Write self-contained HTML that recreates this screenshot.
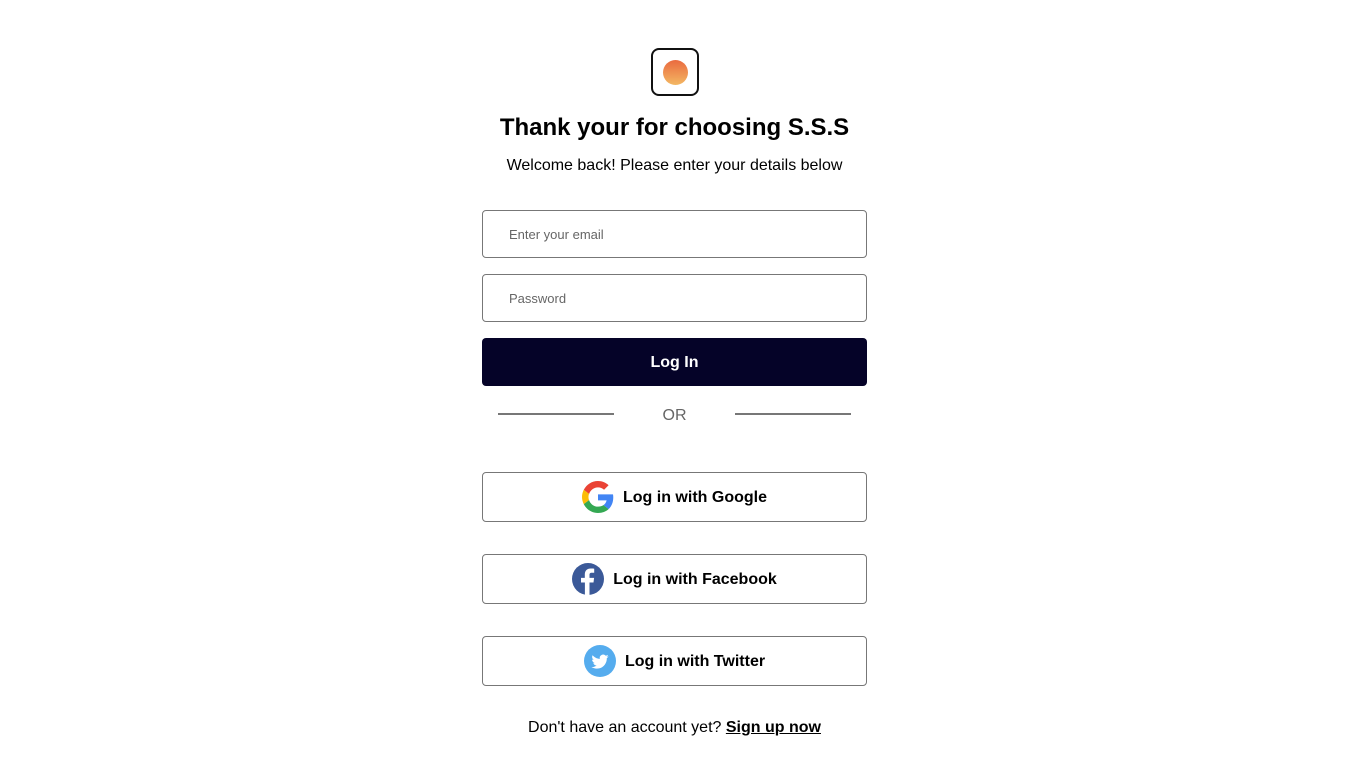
<!DOCTYPE html>
<html><head><meta charset="utf-8"><style>
*{box-sizing:border-box;margin:0;padding:0}
body{width:1349px;height:784px;background:#fff;font-family:"Liberation Sans",Arial,sans-serif;position:relative;color:#000}
.abs{position:absolute}
.logo{left:651px;top:48px;width:48px;height:48px;border:2px solid #111;border-radius:8px}
.logo div{position:absolute;left:10px;top:10px;width:25px;height:25px;border-radius:50%;background:linear-gradient(#ea6a3f,#f3b863)}
h1{position:absolute;top:114px;left:0;width:1349px;text-align:center;font-size:24px;font-weight:bold}
.sub{top:157px;left:0;width:1349px;text-align:center;font-size:16px}
.in{left:482px;width:385px;height:48px;border:1px solid #777;border-radius:4px;font-size:13px;color:#666;padding-left:26px;line-height:48px}
.btn{left:482px;top:338px;width:385px;height:48px;background:#050328;border-radius:4px;color:#fff;font-weight:bold;font-size:16px;text-align:center;line-height:50px}
.line{top:413px;width:116px;height:2px;background:#777}
.or{top:407px;left:0;width:1349px;text-align:center;font-size:16px;color:#666}
.soc{left:482px;width:385px;height:50px;border:1px solid #777;border-radius:4px;display:flex;align-items:center;justify-content:center;font-weight:bold;font-size:16px;gap:9px}
.soc span{position:relative;top:1px}
.foot{top:719px;left:0;width:1349px;text-align:center;font-size:16px}
.foot b{text-decoration:underline}
</style></head><body>
<div class="abs logo"><div></div></div>
<h1>Thank your for choosing S.S.S</h1>
<div class="abs sub">Welcome back! Please enter your details below</div>
<div class="abs in" style="top:210px">Enter your email</div>
<div class="abs in" style="top:274px">Password</div>
<div class="abs btn">Log In</div>
<div class="abs line" style="left:498px"></div>
<div class="abs line" style="left:735px"></div>
<div class="abs or">OR</div>
<div class="abs soc" style="top:472px"><svg width="32" height="32" viewBox="0 0 48 48"><path fill="#EA4335" d="M24 9.5c3.5 0 6.6 1.2 9.1 3.6l6.8-6.8C35.8 2.4 30.3 0 24 0 14.6 0 6.6 5.4 2.7 13.3l7.9 6.2C12.5 13.7 17.8 9.5 24 9.5z"/><path fill="#4285F4" d="M46.9 24.5c0-1.6-.1-3.1-.4-4.5H24v9h12.9c-.6 3-2.300 5.500-4.800 7.200l7.700 6c4.500-4.200 7.100-10.300 7.100-17.700z"/><path fill="#FBBC05" d="M10.5 28.6c-.5-1.4-.8-3-.8-4.6s.3-3.2.8-4.6l-7.9-6.2C1 16.5 0 20.1 0 24s1 7.5 2.7 10.8l7.8-6.2z"/><path fill="#34A853" d="M24 48c6.5 0 11.9-2.1 15.9-5.8l-7.7-6c-2.2 1.5-5 2.3-8.2 2.3-6.2 0-11.5-4.2-13.4-9.9l-7.9 6.1C6.6 42.6 14.6 48 24 48z"/></svg><span>Log in with Google</span></div>
<div class="abs soc" style="top:554px"><svg width="32" height="32" viewBox="0 0 32 32"><circle cx="16" cy="16" r="16" fill="#3b5998"/><path fill="#fff" d="M17.5 32V19.5h4l.6-4.6h-4.6V12c0-1.3.4-2.2 2.3-2.2h2.4V5.7c-.4-.1-1.9-.2-3.5-.2-3.5 0-5.900 2.100-5.900 6v3.400H9v4.600h3.900V32z"/></svg><span>Log in with Facebook</span></div>
<div class="abs soc" style="top:636px"><svg width="32" height="32" viewBox="0 0 32 32"><circle cx="16" cy="16" r="16" fill="#55acee"/><path fill="#fff" d="M24.5 11.2c-.6.3-1.3.5-2 .6.7-.4 1.3-1.1 1.5-1.9-.7.4-1.4.7-2.2.8a3.5 3.5 0 0 0-6 3.2c-2.9-.1-5.5-1.5-7.2-3.6-.9 1.6-.4 3.6 1.1 4.6-.6 0-1.1-.2-1.6-.4 0 1.7 1.2 3.2 2.8 3.5-.5.1-1.1.2-1.6.1.5 1.4 1.8 2.4 3.3 2.4-1.5 1.2-3.4 1.7-5.2 1.5 1.6 1 3.4 1.6 5.4 1.6 6.5 0 10.2-5.5 10-10.5.7-.5 1.3-1.1 1.7-1.9z"/></svg><span>Log in with Twitter</span></div>
<div class="abs foot">Don't have an account yet? <b>Sign up now</b></div>
</body></html>
